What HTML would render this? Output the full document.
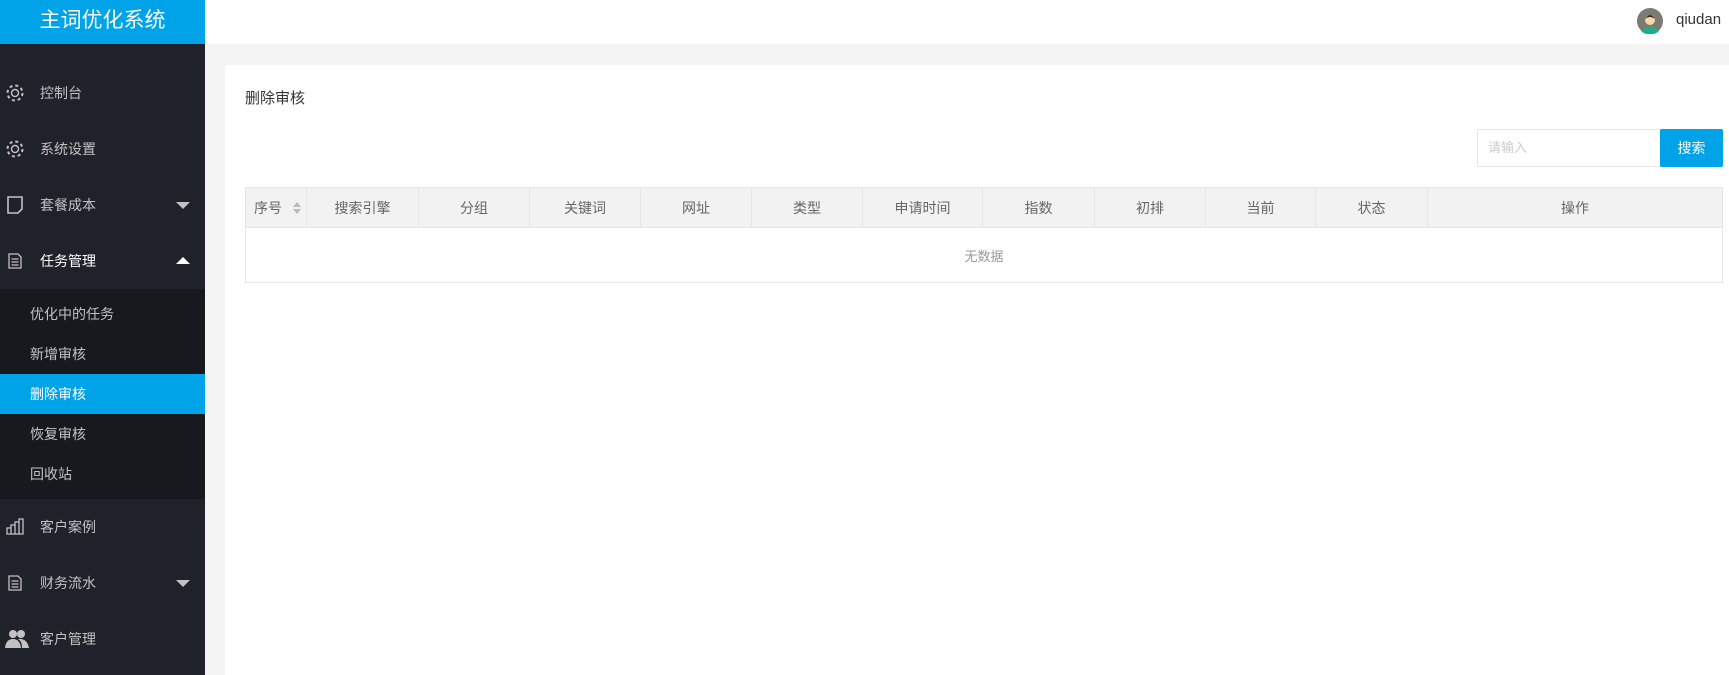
<!DOCTYPE html>
<html><head><meta charset="utf-8"><style>
*{margin:0;padding:0;box-sizing:border-box}
body{width:1729px;height:675px;overflow:hidden;background:#f4f4f4;font-family:"Liberation Sans","Noto Sans CJK SC",sans-serif;font-size:14px;position:relative}
.logo{position:absolute;left:0;top:0;width:205px;height:44px;background:#00a2e8;color:#fff;font-size:21px;line-height:42px;text-align:center}
.top{position:absolute;left:205px;top:0;right:0;height:44px;background:#fff}
.side{position:absolute;left:0;top:44px;width:205px;bottom:0;background:#20222a}
.it{position:absolute;left:0;width:205px;height:56px;line-height:56px;color:#c2c2c2;padding-left:40px}
.it svg{position:absolute;left:5px;top:18px}
.arr{position:absolute;right:15px;top:25px;width:0;height:0;border-left:7px solid transparent;border-right:7px solid transparent;border-top:7px solid #c2c2c2}
.arr.up{border-top:0;border-bottom:7px solid #fff;top:24px}
.sub{position:absolute;left:0;top:245px;width:205px;height:210px;background:#18191f}
.si{height:40px;line-height:40px;padding-left:30px;color:#c2c2c2}
.si.on{background:#00a2e8;color:#fff}
.card{position:absolute;left:225px;top:65px;right:0;bottom:0;background:#fff}
.t{position:absolute;left:20px;top:22px;font-size:15px;color:#333}
.inp{position:absolute;left:1252px;top:64px;width:184px;height:38px;border:1px solid #e6e6e6;color:#ccc;font-size:13px;line-height:36px;padding-left:10px}
.btn{position:absolute;left:1435px;top:64px;width:63px;height:38px;background:#00a2e8;color:#fff;font-size:14px;line-height:38px;text-align:center;border-radius:2px}
table{position:absolute;left:20px;top:122px;width:1478px;border-collapse:collapse}
th{background:#f2f2f2;height:40px;font-weight:normal;color:#666;font-size:14px;border:1px solid #e6e6e6}
td{height:55px;text-align:center;color:#999;border:1px solid #e6e6e6;font-size:13px}
</style></head><body>
<div class="logo">主词优化系统</div>
<div class="top">
<svg style="position:absolute;left:1432px;top:8px" width="26" height="26" viewBox="0 0 26 26"><circle cx="13" cy="13" r="13" fill="#7b7b73"/><path d="M4 23 Q13 16 22 23 A13 13 0 0 1 4 23Z" fill="#1aae8a"/><circle cx="13" cy="12" r="5" fill="#f5d7a8"/><path d="M8 11 Q13 3 18 11 Q13 7 8 11Z" fill="#3a2a20"/></svg>
<span style="position:absolute;left:1471px;top:11px;font-size:15px;color:#333">qiudan</span></div>
<div class="side">
<div class="it" style="top:21px"><svg width="20" height="20" viewBox="0 0 20 20"><circle cx="10" cy="10" r="3.5" fill="none" stroke="#c2c2c2" stroke-width="1.4"/><circle cx="10" cy="10" r="7.5" fill="none" stroke="#c2c2c2" stroke-width="2" stroke-dasharray="3 2.9"/></svg>控制台</div>
<div class="it" style="top:77px"><svg width="20" height="20" viewBox="0 0 20 20"><circle cx="10" cy="10" r="3.5" fill="none" stroke="#c2c2c2" stroke-width="1.4"/><circle cx="10" cy="10" r="7.5" fill="none" stroke="#c2c2c2" stroke-width="2" stroke-dasharray="3 2.9"/></svg>系统设置</div>
<div class="it" style="top:133px"><svg width="20" height="20" viewBox="0 0 20 20"><path d="M3 2H17V14L13 18H3Z" fill="none" stroke="#c2c2c2" stroke-width="1.6"/></svg>套餐成本<span class="arr"></span></div>
<div class="it" style="top:189px;color:#fff"><svg width="20" height="20" viewBox="0 0 20 20"><path d="M4 3H13L16 6V17H4Z M6.5 8H13.5M6.5 11H13.5M6.5 14H13.5" fill="none" stroke="#c2c2c2" stroke-width="1.3"/></svg>任务管理<span class="arr up"></span></div>
<div class="sub">
<div class="si" style="margin-top:5px">优化中的任务</div><div class="si">新增审核</div><div class="si on">删除审核</div><div class="si">恢复审核</div><div class="si">回收站</div></div>
<div class="it" style="top:455px"><svg width="20" height="20" viewBox="0 0 20 20"><path d="M2 17V11H6V17ZM6 17V8H10V17ZM10 17V5H14V17ZM14 17V2H18V17Z" fill="none" stroke="#c2c2c2" stroke-width="1.3"/></svg>客户案例</div>
<div class="it" style="top:511px"><svg width="20" height="20" viewBox="0 0 20 20"><path d="M4 3H13L16 6V17H4Z M6.5 8H13.5M6.5 11H13.5M6.5 14H13.5" fill="none" stroke="#c2c2c2" stroke-width="1.3"/></svg>财务流水<span class="arr"></span></div>
<div class="it" style="top:567px"><svg width="24" height="20" viewBox="0 0 24 20"><circle cx="8" cy="5" r="4" fill="#c2c2c2"/><circle cx="16" cy="5" r="4" fill="#c2c2c2"/><path d="M0 19Q1 10 8 10Q15 10 16 19ZM17 19Q17 12 13 10Q22 9 24 19Z" fill="#c2c2c2"/></svg>客户管理</div>
</div>
<div class="card">
<div class="t">删除审核</div>
<div class="inp">请输入</div><div class="btn">搜索</div>
<table><tr>
<th style="width:61px;text-align:left;padding-left:8px">序号 <svg width="10" height="14" viewBox="0 0 10 14" style="vertical-align:-2px;margin-left:6px"><path d="M5 1L9 6H1ZM5 13L9 8H1Z" fill="#bbb"/></svg></th><th style="width:112px">搜索引擎</th><th style="width:111px">分组</th><th style="width:111px">关键词</th><th style="width:111px">网址</th><th style="width:111px">类型</th><th style="width:120px">申请时间</th><th style="width:112px">指数</th><th style="width:111px">初排</th><th style="width:110px">当前</th><th style="width:112px">状态</th><th>操作</th></tr>
<tr><td colspan="12">无数据</td></tr></table>
</div>
</body></html>
